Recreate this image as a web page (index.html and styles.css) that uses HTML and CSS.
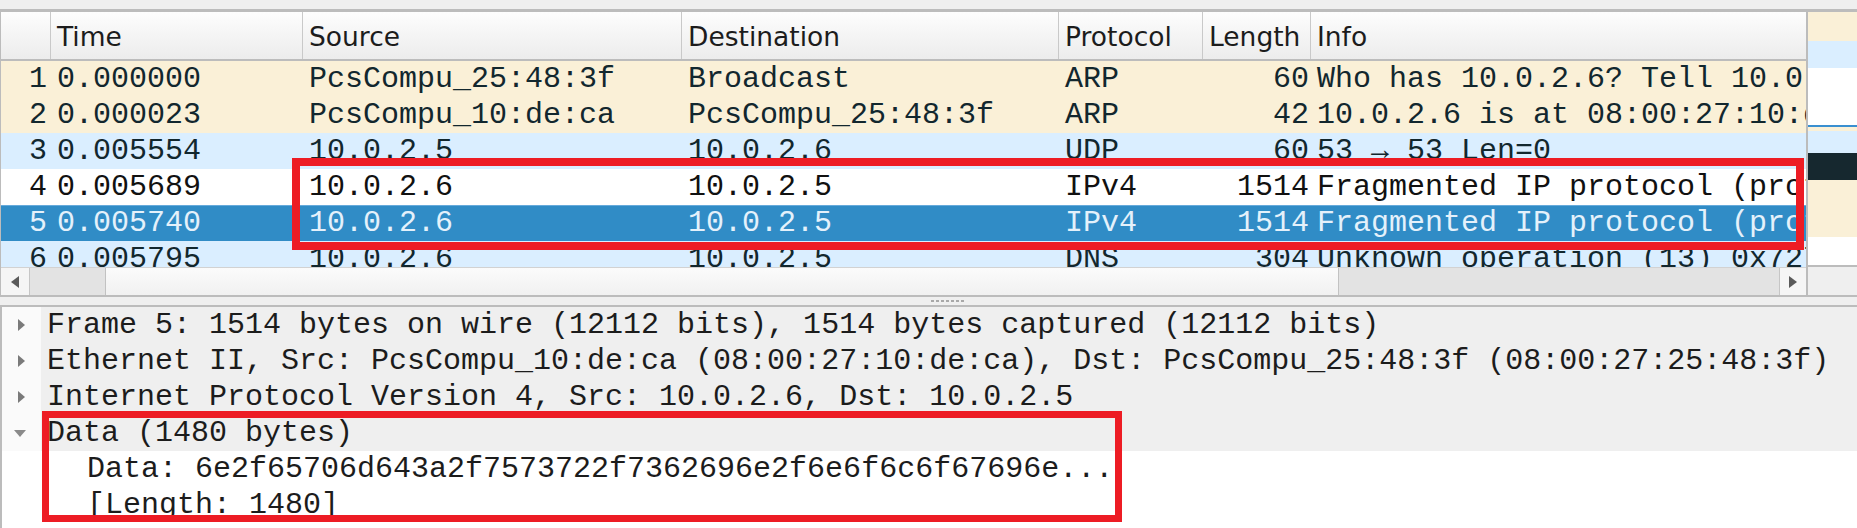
FILE: index.html
```html
<!DOCTYPE html>
<html>
<head>
<meta charset="utf-8">
<link rel="stylesheet" href="styles.css">
</head>
<body>
<div class="app">
  <div class="topstrip"></div>
  <div class="upper">
    <div class="plist">
      <div class="phead cols">
        <div class="hc"></div>
        <div class="hc">Time</div>
        <div class="hc">Source</div>
        <div class="hc">Destination</div>
        <div class="hc">Protocol</div>
        <div class="hc">Length</div>
        <div class="hc last">Info</div>
      </div>
      <div class="prows">
        <div class="prow cols arp"><span class="num">1</span><span class="cell">0.000000</span><span class="cell">PcsCompu_25:48:3f</span><span class="cell">Broadcast</span><span class="cell">ARP</span><span class="len">60</span><span class="cell">Who has 10.0.2.6? Tell 10.0.2.5</span></div>
        <div class="prow cols arp"><span class="num">2</span><span class="cell">0.000023</span><span class="cell">PcsCompu_10:de:ca</span><span class="cell">PcsCompu_25:48:3f</span><span class="cell">ARP</span><span class="len">42</span><span class="cell">10.0.2.6 is at 08:00:27:10:de:ca</span></div>
        <div class="prow cols udp"><span class="num">3</span><span class="cell">0.005554</span><span class="cell">10.0.2.5</span><span class="cell">10.0.2.6</span><span class="cell">UDP</span><span class="len">60</span><span class="cell">53 → 53 Len=0</span></div>
        <div class="prow cols plain"><span class="num">4</span><span class="cell">0.005689</span><span class="cell">10.0.2.6</span><span class="cell">10.0.2.5</span><span class="cell">IPv4</span><span class="len">1514</span><span class="cell">Fragmented IP protocol (proto=UDP 17, off=0, ID=0001)</span></div>
        <div class="prow cols sel"><span class="num">5</span><span class="cell">0.005740</span><span class="cell">10.0.2.6</span><span class="cell">10.0.2.5</span><span class="cell">IPv4</span><span class="len">1514</span><span class="cell">Fragmented IP protocol (proto=UDP 17, off=1480, ID=0001)</span></div>
        <div class="prow cols udp"><span class="num">6</span><span class="cell">0.005795</span><span class="cell">10.0.2.6</span><span class="cell">10.0.2.5</span><span class="cell">DNS</span><span class="len">304</span><span class="cell">Unknown operation (13) 0x7272</span></div>
      </div>
      <div class="hscroll">
        <div class="sbtn">
          <svg width="8" height="12" viewBox="0 0 8 12"><path d="M8 0 L0 6 L8 12 Z" fill="#5a5a5a"/></svg>
        </div>
        <div class="track track-l"></div>
        <div class="thumb"></div>
        <div class="track track-r"></div>
        <div class="sbtn sbtn-r">
          <svg width="8" height="12" viewBox="0 0 8 12"><path d="M0 0 L8 6 L0 12 Z" fill="#5a5a5a"/></svg>
        </div>
      </div>
    </div>
    <div class="side">
      <div class="minimap">
        <div class="mm beige" style="height:29px"></div>
        <div class="mm blue" style="height:27px"></div>
        <div class="mm white" style="height:57px"></div>
        <div class="mm selline" style="height:2px"></div>
        <div class="mm beige" style="height:4px"></div>
        <div class="mm blue" style="height:22px"></div>
        <div class="mm navy" style="height:27px"></div>
        <div class="mm beige" style="height:57px"></div>
        <div class="mm white" style="height:28px"></div>
      </div>
      <div class="corner"></div>
    </div>
  </div>
  <div class="splitter"><span class="grip"></span></div>
  <div class="details">
    <div class="drow">
      <div class="branch"><svg width="7" height="12" viewBox="0 0 7 12"><path d="M0 0 L7 6 L0 12 Z" fill="#7a7a7a"/></svg></div>
      <div class="txt">Frame 5: 1514 bytes on wire (12112 bits), 1514 bytes captured (12112 bits)</div>
    </div>
    <div class="drow">
      <div class="branch"><svg width="7" height="12" viewBox="0 0 7 12"><path d="M0 0 L7 6 L0 12 Z" fill="#7a7a7a"/></svg></div>
      <div class="txt">Ethernet II, Src: PcsCompu_10:de:ca (08:00:27:10:de:ca), Dst: PcsCompu_25:48:3f (08:00:27:25:48:3f)</div>
    </div>
    <div class="drow">
      <div class="branch"><svg width="7" height="12" viewBox="0 0 7 12"><path d="M0 0 L7 6 L0 12 Z" fill="#7a7a7a"/></svg></div>
      <div class="txt">Internet Protocol Version 4, Src: 10.0.2.6, Dst: 10.0.2.5</div>
    </div>
    <div class="drow">
      <div class="branch open"><svg width="12" height="7" viewBox="0 0 12 7"><path d="M0 0 L12 0 L6 7 Z" fill="#8a8a8a"/></svg></div>
      <div class="txt">Data (1480 bytes)</div>
    </div>
    <div class="drow child">
      <div class="branch"></div>
      <div class="txt">Data: 6e2f65706d643a2f7573722f7362696e2f6e6f6c6f67696e...</div>
    </div>
    <div class="drow child">
      <div class="branch"></div>
      <div class="txt">[Length: 1480]</div>
    </div>
  </div>
  <div class="mark mark-rows"></div>
  <div class="mark mark-data"></div>
</div>
</body>
</html>
```

FILE: styles.css
```css
* { box-sizing: border-box; }

html, body {
  margin: 0;
  padding: 0;
}

body {
  width: 1857px;
  height: 528px;
  overflow: hidden;
  background: #efefef;
  font-family: "Liberation Mono", monospace;
}

.app {
  position: relative;
  width: 1857px;
  height: 528px;
}

.topstrip {
  height: 12px;
  background: #efefef;
  border-bottom: 3px solid #bcbcbc;
}

.upper {
  display: flex;
  height: 285px;
  border-bottom: 2px solid #bcbcbc;
}

.plist {
  width: 1808px;
  border-left: 1px solid #bcbcbc;
  border-right: 2px solid #bcbcbc;
  display: flex;
  flex-direction: column;
  background: #fff;
}

.cols {
  display: grid;
  grid-template-columns: 50px 252px 379px 377px 144px 108px 1fr;
}

.phead {
  height: 49px;
  border-bottom: 2px solid #bcbcbc;
  background: linear-gradient(#fdfdfd, #ececec);
}

.hc {
  border-right: 1px solid #c9c9c9;
  font-family: "DejaVu Sans", sans-serif;
  font-size: 26.5px;
  line-height: 44px;
  padding: 3px 0 0 6px;
  color: #1c1c1c;
  white-space: nowrap;
  overflow: hidden;
}

.hc.last { border-right: none; }

.prows {
  height: 206px;
  overflow: hidden;
}

.prow {
  height: 36px;
  font-size: 30px;
  line-height: 36px;
  white-space: nowrap;
  color: #12272e;
}

.prow > span { overflow: hidden; }

.prow .num { text-align: right; padding-right: 4px; }
.prow .cell { padding-left: 6px; }
.prow .len { text-align: right; padding-right: 2px; }

.arp { background: #faf0d7; }
.udp { background: #daeeff; }
.plain { background: #ffffff; color: #111111; }
.sel {
  background: #308cc6;
  color: #e4f1fb;
  box-shadow: inset 0 1px 0 #66aadb;
}

.hscroll {
  height: 28px;
  display: flex;
  background: #e3e3e3;
  border-top: 1px solid #d2d2d2;
}

.sbtn {
  width: 29px;
  background: #f5f5f5;
  display: flex;
  align-items: center;
  justify-content: center;
  border-right: 1px solid #c6c6c6;
}

.sbtn-r {
  width: 27px;
  border-right: none;
  border-left: 1px solid #c6c6c6;
}

.track-l { width: 75px; }
.track-r { flex: 1; }

.thumb {
  width: 1234px;
  background: linear-gradient(#fbfbfb, #f1f1f1);
  border-left: 1px solid #c2c2c2;
  border-right: 1px solid #c2c2c2;
}

.side {
  flex: 1;
  display: flex;
  flex-direction: column;
}

.minimap {
  height: 255px;
  border-bottom: 2px solid #bcbcbc;
  display: flex;
  flex-direction: column;
}

.mm { flex: none; }
.beige { background: #faf0d7; }
.blue { background: #daeeff; }
.white { background: #ffffff; }
.selline { background: #3a8fd0; }
.navy { background: #16282f; }

.corner {
  flex: 1;
  background: #efefef;
}

.splitter {
  height: 10px;
  background: #efefef;
  border-bottom: 2px solid #bcbcbc;
  display: flex;
  justify-content: center;
  padding-top: 3px;
}

.grip {
  width: 34px;
  height: 2px;
  margin-left: 36px;
  background-image: radial-gradient(circle, #a8a8a8 45%, transparent 55%);
  background-size: 5px 2px;
}

.details {
  height: 221px;
  border-left: 2px solid #bcbcbc;
  background: #ffffff;
  overflow: hidden;
}

.drow {
  display: flex;
  height: 36px;
  font-size: 30px;
  line-height: 36px;
  color: #1c1c1c;
  white-space: nowrap;
}

.branch {
  width: 39px;
  flex: none;
  background: #fafafa;
  display: flex;
  align-items: center;
  padding-left: 16px;
}

.branch.open { padding-left: 12px; }

.txt {
  flex: 1;
  background: #efefef;
  padding-left: 6px;
  overflow: hidden;
}

.child .txt {
  background: #ffffff;
  padding-left: 46px;
}

.child .branch { background: #ffffff; }

.mark {
  position: absolute;
  border: 8px solid #ed1c24;
}

.mark-rows {
  left: 292px;
  top: 158px;
  width: 1512px;
  height: 92px;
}

.mark-data {
  left: 42px;
  top: 411px;
  width: 1080px;
  height: 111px;
  border-width: 7px;
}
```
